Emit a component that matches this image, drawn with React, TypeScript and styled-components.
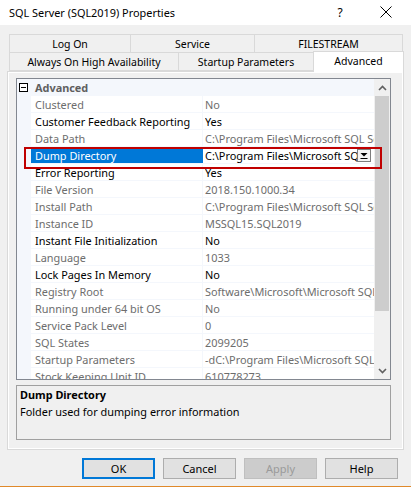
import React from "react";
import styled, { createGlobalStyle } from "styled-components";

const GlobalStyle = createGlobalStyle`
  html, body { margin: 0; padding: 0; background: #f0f0f0; }
  body {
    font-family: "Noto Sans", "Open Sans", sans-serif;
    font-size: 10.9px;
    color: #000;
  }
  * { box-sizing: border-box; }
`;

const Window = styled.div`
  width: 411px;
  height: 487px;
  display: flex;
  flex-direction: column;
  background: #f0f0f0;
  border-bottom: 1px solid #e0892a;
  overflow: hidden;
`;

const TitleBar = styled.div`
  height: 25px;
  background: #fff;
  display: flex;
  align-items: center;
  padding: 0 0 1px 9px;
`;

const TitleText = styled.div`
  flex: 1;
  font-size: 10.9px;
  white-space: nowrap;
`;

const HelpGlyph = styled.div`
  width: 12px;
  text-align: center;
  font-size: 12px;
  margin-right: 34px;
`;

const CloseGlyph = styled.svg`
  width: 12px;
  height: 12px;
  margin-right: 19px;
`;

const Body = styled.div`
  padding: 9px 7px 0 7px;
  display: flex;
  flex-direction: column;
`;

const TabStrip = styled.div`
  margin-left: 2px;
  width: 395px;
  display: flex;
  flex-direction: column;
  position: relative;
  z-index: 1;
  font-size: 10.5px;
`;

const TabRow = styled.div`
  display: flex;
  height: 18px;
  align-items: flex-end;
`;

const Tab = styled.div<{ $w: number; $selected?: boolean }>`
  width: ${(p) => p.$w}px;
  height: ${(p) => (p.$selected ? 21 : 19)}px;
  margin-right: -1px;
  margin-bottom: ${(p) => (p.$selected ? -2 : -1)}px;
  border: 1px solid #d9d9d9;
  border-bottom: ${(p) => (p.$selected ? "none" : "1px solid #d9d9d9")};
  background: ${(p) => (p.$selected ? "#fff" : "#f0f0f0")};
  display: flex;
  justify-content: center;
  align-items: ${(p) => (p.$selected ? "flex-start" : "center")};
  padding-top: ${(p) => (p.$selected ? 2 : 0)}px;
  white-space: nowrap;
  position: relative;
  z-index: ${(p) => (p.$selected ? 2 : 0)};
`;

const Panel = styled.div`
  width: 397px;
  height: 379px;
  margin-top: 1px;
  border: 1px solid #d9d9d9;
  box-shadow: inset 0 0 0 1px #fff;
  background: #f0f0f0;
  padding: 6px 0 0 8px;
  display: flex;
  flex-direction: column;
`;

const GridFrame = styled.div`
  width: 375px;
  height: 302px;
  border: 1px solid #828790;
  display: flex;
  position: relative;
  background: #fff;
`;

const RowsArea = styled.div`
  flex: 1;
  overflow: hidden;
  display: flex;
  flex-direction: column;
`;

const CategoryRow = styled.div`
  height: 17px;
  flex: none;
  background: #f4f7fc;
  display: flex;
  align-items: center;
`;

const CategoryMargin = styled.div`
  width: 14px;
  height: 100%;
  display: flex;
  align-items: center;
  padding-left: 2px;
`;

const Expander = styled.div`
  width: 9px;
  height: 9px;
  border: 1px solid #000;
  background: #fff;
  display: flex;
  align-items: center;
  justify-content: center;
  &::after {
    content: "";
    width: 5px;
    height: 1px;
    background: #000;
  }
`;

const CategoryLabel = styled.div`
  padding-left: 4px;
  font-weight: bold;
  color: #5f5f5f;
`;

const Row = styled.div`
  height: 17px;
  flex: none;
  display: flex;
  border-bottom: 1px solid #f4f7fc;
`;

const RowMargin = styled.div`
  width: 14px;
  flex: none;
  background: #f4f7fc;
`;

const NameCell = styled.div<{ $tone: string; $selected?: boolean }>`
  width: 172px;
  flex: none;
  padding-left: 4px;
  border-right: 1px solid ${(p) => (p.$selected ? "#0078d7" : "#f4f7fc")};
  background: ${(p) => (p.$selected ? "#0078d7" : "#fff")};
  color: ${(p) => (p.$selected ? "#fff" : p.$tone)};
  display: flex;
  align-items: center;
  white-space: nowrap;
  overflow: hidden;
`;

const ValueCell = styled.div<{ $tone: string }>`
  flex: 1;
  min-width: 0;
  padding-left: 2px;
  color: ${(p) => p.$tone};
  display: flex;
  align-items: center;
  white-space: nowrap;
  overflow: hidden;
`;

const ValueText = styled.span`
  flex: 1;
  min-width: 0;
  overflow: hidden;
`;

const DropButton = styled.svg`
  flex: none;
  width: 14px;
  height: 13px;
  margin-right: 3px;
  margin-top: 1px;
`;

const ScrollBar = styled.div`
  width: 16px;
  flex: none;
  background: #f0f0f0;
  display: flex;
  flex-direction: column;
  align-items: center;
`;

const ScrollArrow = styled.div`
  height: 17px;
  width: 100%;
  display: flex;
  align-items: center;
  justify-content: center;
  flex: none;
`;

const ScrollThumb = styled.div`
  width: 14px;
  height: 215px;
  background: #cdcdcd;
  flex: none;
`;

const ScrollTrack = styled.div`
  flex: 1;
`;

const Highlight = styled.div`
  position: absolute;
  left: 7px;
  top: 68px;
  width: 358px;
  height: 22px;
  border: 2px solid #c00000;
  pointer-events: none;
  z-index: 3;
`;

const Description = styled.div`
  width: 375px;
  height: 55px;
  margin-top: 5px;
  border: 1px solid #a0a0a0;
  padding: 1px 3px 0 3px;
  display: flex;
  flex-direction: column;
`;

const DescTitle = styled.div`
  font-weight: bold;
  line-height: 15px;
`;

const DescText = styled.div`
  line-height: 16px;
  margin-top: 2px;
`;

const ButtonBar = styled.div`
  display: flex;
  justify-content: flex-end;
  gap: 8px;
  padding-right: 6px;
  margin-top: 8px;
`;

const Button = styled.div<{ $default?: boolean; $disabled?: boolean }>`
  width: 73px;
  height: 21px;
  display: flex;
  align-items: center;
  justify-content: center;
  background: ${(p) => (p.$disabled ? "#cccccc" : "#e1e1e1")};
  border: ${(p) =>
    p.$default ? "2px solid #0078d7" : p.$disabled ? "1px solid #bfbfbf" : "1px solid #adadad"};
  color: ${(p) => (p.$disabled ? "#9a9a9a" : "#000")};
  font-size: 11px;
`;

const GRAY = "#6d6d6d";
const BLACK = "#000";

type Prop = { name: string; value: string; tone: string; selected?: boolean };

const props: Prop[] = [
  { name: "Clustered", value: "No", tone: GRAY },
  { name: "Customer Feedback Reporting", value: "Yes", tone: BLACK },
  { name: "Data Path", value: "C:\\Program Files\\Microsoft SQL Server\\MSSQL15.SQL2019\\MSSQL\\DATA", tone: GRAY },
  { name: "Dump Directory", value: "C:\\Program Files\\Microsoft SQL Server\\MSSQL15.SQL2019\\MSSQL\\Log", tone: BLACK, selected: true },
  { name: "Error Reporting", value: "Yes", tone: BLACK },
  { name: "File Version", value: "2018.150.1000.34", tone: GRAY },
  { name: "Install Path", value: "C:\\Program Files\\Microsoft SQL Server\\MSSQL15.SQL2019\\MSSQL", tone: GRAY },
  { name: "Instance ID", value: "MSSQL15.SQL2019", tone: GRAY },
  { name: "Instant File Initialization", value: "No", tone: BLACK },
  { name: "Language", value: "1033", tone: GRAY },
  { name: "Lock Pages In Memory", value: "No", tone: BLACK },
  { name: "Registry Root", value: "Software\\Microsoft\\Microsoft SQL Server\\MSSQL15.SQL2019", tone: GRAY },
  { name: "Running under 64 bit OS", value: "No", tone: GRAY },
  { name: "Service Pack Level", value: "0", tone: GRAY },
  { name: "SQL States", value: "2099205", tone: GRAY },
  { name: "Startup Parameters", value: "-dC:\\Program Files\\Microsoft SQL Server\\MSSQL15.SQL2019\\MSSQL\\DATA\\master.mdf", tone: GRAY },
  { name: "Stock Keeping Unit ID", value: "610778273", tone: GRAY },
];

const Chevron = ({ up }: { up?: boolean }) => (
  <svg width="9" height="6" viewBox="0 0 9 6">
    <path
      d={up ? "M1 5 L4.5 1.5 L8 5" : "M1 1 L4.5 4.5 L8 1"}
      fill="none"
      stroke="#606060"
      strokeWidth="1.6"
    />
  </svg>
);

export default function App() {
  return (
    <>
      <GlobalStyle />
      <Window>
        <TitleBar>
          <TitleText>SQL Server (SQL2019) Properties</TitleText>
          <HelpGlyph>?</HelpGlyph>
          <CloseGlyph viewBox="0 0 12 12">
            <path d="M0.5 0.5 L11.5 11.5 M11.5 0.5 L0.5 11.5" stroke="#000" strokeWidth="1" />
          </CloseGlyph>
        </TitleBar>
        <Body>
          <TabStrip>
            <TabRow>
              <Tab $w={122}>Log On</Tab>
              <Tab $w={125}>Service</Tab>
              <Tab $w={149}>FILESTREAM</Tab>
            </TabRow>
            <TabRow>
              <Tab $w={170}>Always On High Availability</Tab>
              <Tab $w={136}>Startup Parameters</Tab>
              <Tab $w={91} $selected>
                Advanced
              </Tab>
            </TabRow>
          </TabStrip>
          <Panel>
            <GridFrame>
              <RowsArea>
                <CategoryRow>
                  <CategoryMargin>
                    <Expander />
                  </CategoryMargin>
                  <CategoryLabel>Advanced</CategoryLabel>
                </CategoryRow>
                {props.map((p) => (
                  <Row key={p.name}>
                    <RowMargin />
                    <NameCell $tone={p.tone} $selected={p.selected}>
                      {p.name}
                    </NameCell>
                    <ValueCell $tone={p.tone}>
                      <ValueText>{p.value}</ValueText>
                      {p.selected && (
                        <DropButton viewBox="0 0 14 13">
                          <rect x="0.5" y="0.5" width="13" height="12" fill="#f4f4f4" stroke="#000" strokeDasharray="1 1" />
                          <path d="M3.5 4 L10.5 4 L7 7.5 Z" fill="#000" />
                          <path d="M3.5 9.5 L10.5 9.5" stroke="#000" strokeWidth="1" />
                        </DropButton>
                      )}
                    </ValueCell>
                  </Row>
                ))}
              </RowsArea>
              <ScrollBar>
                <ScrollArrow>
                  <Chevron up />
                </ScrollArrow>
                <ScrollThumb />
                <ScrollTrack />
                <ScrollArrow>
                  <Chevron />
                </ScrollArrow>
              </ScrollBar>
              <Highlight />
            </GridFrame>
            <Description>
              <DescTitle>Dump Directory</DescTitle>
              <DescText>Folder used for dumping error information</DescText>
            </Description>
          </Panel>
          <ButtonBar>
            <Button $default>OK</Button>
            <Button>Cancel</Button>
            <Button $disabled>Apply</Button>
            <Button>Help</Button>
          </ButtonBar>
        </Body>
      </Window>
    </>
  );
}
